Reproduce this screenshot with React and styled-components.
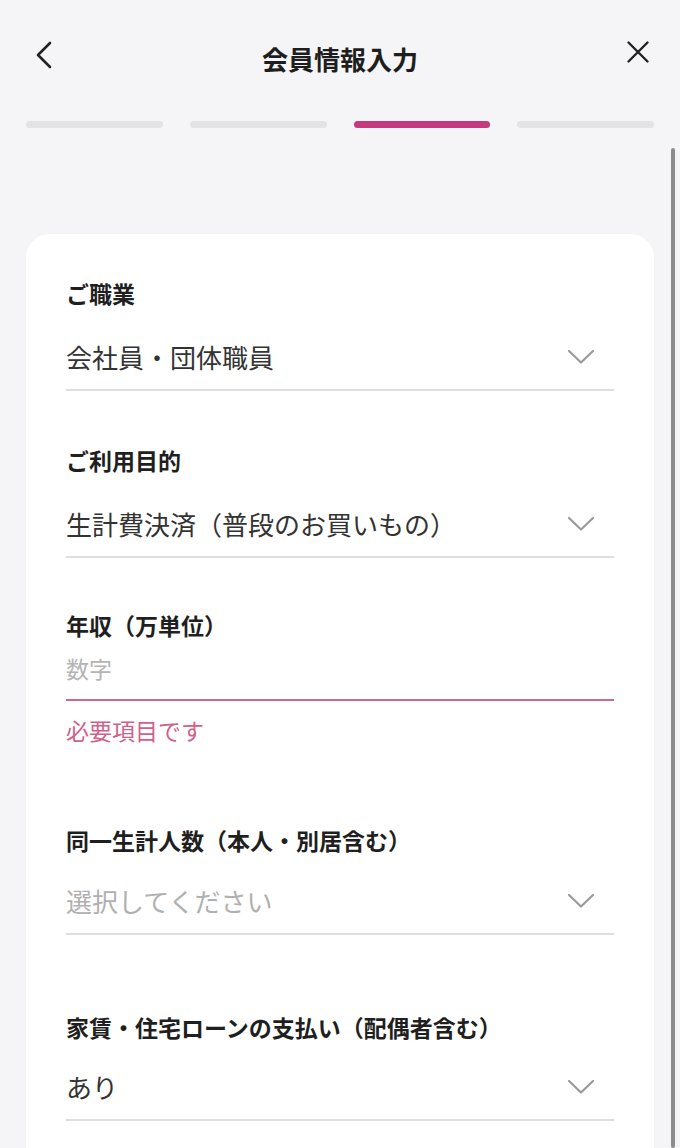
import React from "react";
import styled, { createGlobalStyle } from "styled-components";

const Global = createGlobalStyle`
  html, body { margin: 0; padding: 0; height: 100%; overflow: hidden; }
  body {
    background: #f5f5f7;
    font-family: "Noto Sans CJK JP", "Noto Sans", sans-serif;
    color: #222;
  }
`;

const Page = styled.div`
  position: relative;
  width: 680px;
  height: 1148px;
  overflow: hidden;
  background: #f5f5f7;
`;

const Header = styled.header`
  display: flex;
  align-items: center;
  justify-content: space-between;
  height: 52px;
  margin-top: 32px;
  padding: 0 30px 0 34px;
`;

const IconButton = styled.button`
  display: flex;
  align-items: center;
  justify-content: center;
  width: ${(p) => p.$w}px;
  height: 32px;
  padding: 0;
  border: none;
  background: transparent;
  margin-top: ${(p) => p.$mt || 0}px;
`;

const Title = styled.h1`
  margin: 0;
  font-size: 26px;
  font-weight: 700;
  line-height: 52px;
  color: #1e1e1e;
  margin-top: 2px;
`;

const Progress = styled.div`
  display: flex;
  gap: 27px;
  margin-top: 37px;
  padding: 0 26px;
`;

const Step = styled.div`
  flex: 1;
  height: 7px;
  border-radius: 4px;
  background: ${(p) => (p.$active ? "#c43a7c" : "#e3e3e6")};
`;

const Card = styled.section`
  margin: 106px 26px 0;
  background: #ffffff;
  border-radius: 24px 24px 0 0;
  padding: 44px 40px 200px;
`;

const Field = styled.div`
  margin-top: ${(p) => p.$mt || 0}px;
`;

const Label = styled.div`
  font-size: 23px;
  font-weight: 700;
  line-height: 30px;
  color: #1f1f1f;
`;

const SelectRow = styled.div`
  display: flex;
  align-items: center;
  justify-content: space-between;
  padding: ${(p) => p.$pt}px 19px 15px 0;
  border-bottom: 2px solid #dedede;
`;

const Value = styled.span`
  font-size: 26px;
  line-height: 34px;
  font-weight: 400;
  color: ${(p) => (p.$placeholder ? "#b0b0b0" : "#333333")};
`;

const InputRow = styled.div`
  padding: 13px 0 16px;
  border-bottom: 2px solid #cc6a8c;
`;

const Placeholder = styled.span`
  font-size: 23px;
  line-height: 30px;
  color: #b4b4b4;
`;

const ErrorText = styled.div`
  margin-top: 14px;
  font-size: 23px;
  line-height: 30px;
  color: #d25f8b;
`;

const Scrollbar = styled.div`
  position: absolute;
  right: 5px;
  top: 148px;
  bottom: 0;
  width: 4px;
  border-radius: 2px;
  background: #8c8c8c;
`;

const Chevron = () => (
  <svg width="28" height="16" viewBox="0 0 28 16" fill="none">
    <path d="M2 2 L14 13.5 L26 2" stroke="#9a9a9a" strokeWidth="2.2" strokeLinecap="round" strokeLinejoin="round" />
  </svg>
);

const BackIcon = () => (
  <svg width="18" height="28" viewBox="0 0 18 28" fill="none">
    <path d="M15 2 L3 14 L15 26" stroke="#222" strokeWidth="2.6" strokeLinecap="round" strokeLinejoin="round" />
  </svg>
);

const CloseIcon = () => (
  <svg width="24" height="24" viewBox="0 0 24 24" fill="none">
    <path d="M2.5 2.5 L21.5 21.5 M21.5 2.5 L2.5 21.5" stroke="#222" strokeWidth="2.4" strokeLinecap="round" />
  </svg>
);

const SelectField = ({ label, value, placeholder, mt, pt = 30 }) => (
  <Field $mt={mt}>
    <Label>{label}</Label>
    <SelectRow $pt={pt}>
      <Value $placeholder={placeholder}>{value}</Value>
      <Chevron />
    </SelectRow>
  </Field>
);

export default function App() {
  return (
    <Page>
      <Global />
      <Header>
        <IconButton $w={20} $mt={-6} aria-label="戻る">
          <BackIcon />
        </IconButton>
        <Title>会員情報入力</Title>
        <IconButton $w={24} $mt={-12} aria-label="閉じる">
          <CloseIcon />
        </IconButton>
      </Header>
      <Progress>
        <Step />
        <Step />
        <Step $active />
        <Step />
      </Progress>
      <Card>
        <SelectField label="ご職業" value="会社員・団体職員" pt={32} />
        <SelectField label="ご利用目的" value="生計費決済（普段のお買いもの）" mt={54} pt={32} />
        <Field $mt={52}>
          <Label>年収（万単位）</Label>
          <InputRow>
            <Placeholder>数字</Placeholder>
          </InputRow>
          <ErrorText>必要項目です</ErrorText>
        </Field>
        <SelectField label="同一生計人数（本人・別居含む）" value="選択してください" placeholder mt={80} pt={29} />
        <SelectField label="家賃・住宅ローンの支払い（配偶者含む）" value="あり" mt={77} pt={28} />
      </Card>
      <Scrollbar />
    </Page>
  );
}
